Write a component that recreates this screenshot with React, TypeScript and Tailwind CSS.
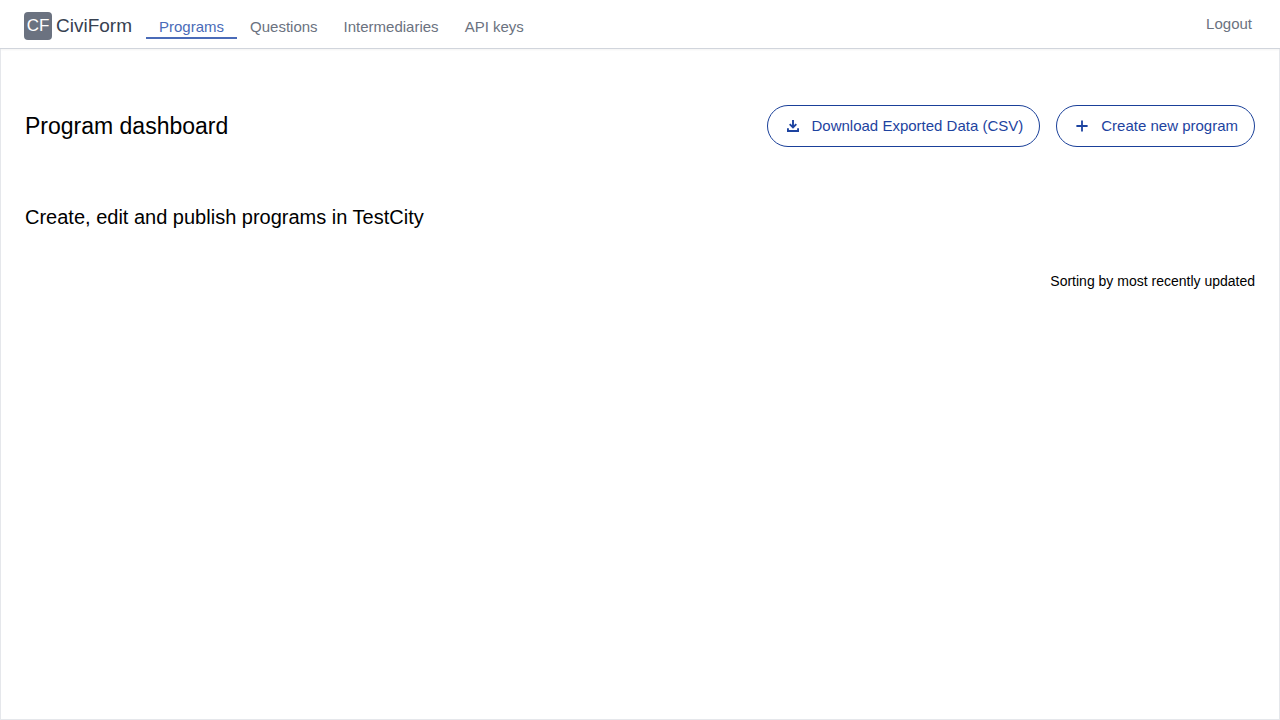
const links = [
  { label: "Programs", active: true },
  { label: "Questions", active: false },
  { label: "Intermediaries", active: false },
  { label: "API keys", active: false },
];

function DownloadIcon() {
  return (
    <svg width="18" height="18" viewBox="0 0 18 18" fill="none" stroke="currentColor" strokeWidth="1.9" aria-hidden="true">
      <path d="M9 3v7.2M5.7 7.2 9 10.5l3.3-3.3M3.95 11.2v2.85h10.1V11.2" />
    </svg>
  );
}

function PlusIcon() {
  return (
    <svg width="18" height="18" viewBox="0 0 18 18" fill="none" stroke="currentColor" strokeWidth="1.8" aria-hidden="true">
      <path d="M9 3.4v11.2M3.4 9h11.2" />
    </svg>
  );
}

function Header() {
  return (
    <header className="flex h-[49px] items-start border-b border-gray-300 bg-white px-6 shadow-xs">
      <a href="#home" className="mt-3 flex h-7 items-center gap-1 text-[19px] text-[#374151]">
        <span className="flex size-7 items-center justify-center rounded bg-[#6b7280] text-[17px] text-white">CF</span>
        CiviForm
      </a>
      <nav className="ml-3.5 flex pt-[15px] text-[15px]">
        {links.map(({ label, active }) => (
          <a
            key={label}
            href="#nav"
            aria-current={active ? "page" : undefined}
            className={
              active
                ? "h-6 border-b-2 border-[#4a6bb8] px-[13px] leading-6 text-[#4a6bb8]"
                : "h-6 border-b-2 border-transparent px-[13px] leading-6 text-[#6b7280]"
            }
          >
            {label}
          </a>
        ))}
      </nav>
      <a href="#logout" className="mt-3 mr-1 ml-auto text-[15px] leading-6 text-[#6b7280]">
        Logout
      </a>
    </header>
  );
}

export default function App() {
  const button =
    "flex h-[42px] items-center gap-2.5 rounded-full border border-[#1a4099] px-4 text-[15px] text-[#1d43a0]";
  return (
    <div className="flex min-h-screen flex-col bg-white font-['Liberation_Sans',Arial,sans-serif] text-base text-black">
      <Header />
      <main className="flex-1 border-x border-b border-gray-200 px-6 pt-14">
        <div className="flex items-center gap-4">
          <h1 className="mr-auto text-[23px]">Program dashboard</h1>
          <button type="button" className={button}>
            <DownloadIcon />
            Download Exported Data (CSV)
          </button>
          <button type="button" className={button}>
            <PlusIcon />
            Create new program
          </button>
        </div>
        <p className="mt-14 text-xl">Create, edit and publish programs in TestCity</p>
        <p className="mt-10 text-right text-sm">Sorting by most recently updated</p>
      </main>
    </div>
  );
}
